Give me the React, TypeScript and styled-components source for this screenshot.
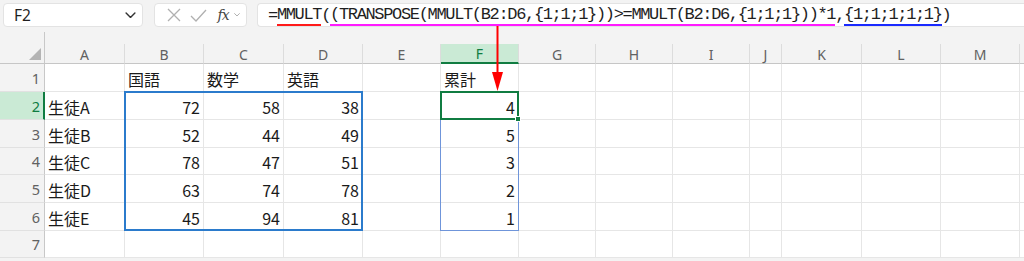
import React from "react";
import styled, { createGlobalStyle } from "styled-components";

const GlobalStyle = createGlobalStyle`
  html, body { margin: 0; padding: 0; background: #f3f3f3; }
  * { box-sizing: border-box; }
`;

const COLS = [
  { key: "", w: 45 },
  { key: "A", w: 80 },
  { key: "B", w: 79 },
  { key: "C", w: 80 },
  { key: "D", w: 79 },
  { key: "E", w: 78 },
  { key: "F", w: 78 },
  { key: "G", w: 77 },
  { key: "H", w: 77 },
  { key: "I", w: 77 },
  { key: "J", w: 32 },
  { key: "K", w: 80 },
  { key: "L", w: 79 },
  { key: "M", w: 79 },
  { key: "N", w: 40 },
];
const HEADER_H = 20;
const ROW_H = [28, 28, 28, 27, 28, 28, 27];
const GRID_TOP = 44;

const colLeft = (i: number) => COLS.slice(0, i).reduce((s, c) => s + c.w, 0);
const rowTop = (r: number) => GRID_TOP + HEADER_H + ROW_H.slice(0, r - 1).reduce((s, h) => s + h, 0);

type CellVal = { t: string; num?: boolean };
const DATA: Record<number, Record<string, CellVal>> = {
  1: { B: { t: "国語" }, C: { t: "数学" }, D: { t: "英語" }, F: { t: "累計" } },
  2: { A: { t: "生徒A" }, B: { t: "72", num: true }, C: { t: "58", num: true }, D: { t: "38", num: true }, F: { t: "4", num: true } },
  3: { A: { t: "生徒B" }, B: { t: "52", num: true }, C: { t: "44", num: true }, D: { t: "49", num: true }, F: { t: "5", num: true } },
  4: { A: { t: "生徒C" }, B: { t: "78", num: true }, C: { t: "47", num: true }, D: { t: "51", num: true }, F: { t: "3", num: true } },
  5: { A: { t: "生徒D" }, B: { t: "63", num: true }, C: { t: "74", num: true }, D: { t: "78", num: true }, F: { t: "2", num: true } },
  6: { A: { t: "生徒E" }, B: { t: "45", num: true }, C: { t: "94", num: true }, D: { t: "81", num: true }, F: { t: "1", num: true } },
};

const Page = styled.div`
  position: relative;
  width: 1024px;
  height: 261px;
  overflow: hidden;
  background: #f3f3f3;
`;

const Toolbar = styled.div`
  display: flex;
  align-items: stretch;
  height: 27px;
  padding: 3px 0 0 3px;
`;

const NameBox = styled.div`
  width: 140px;
  height: 24px;
  background: #fff;
  border: 1px solid #e3e3e3;
  border-radius: 4px;
  display: flex;
  align-items: center;
  justify-content: space-between;
  padding: 0 6px 0 10px;
  font-family: "Noto Sans", "Liberation Sans", sans-serif;
  font-size: 15.5px;
  color: #1f1f1f;
`;

const FnBox = styled.div`
  width: 93px;
  height: 24px;
  margin-left: 11px;
  background: #fff;
  border: 1px solid #e3e3e3;
  border-radius: 4px;
  display: flex;
  align-items: center;
  padding: 0 0 0 8px;
`;

const FnIcon = styled.span<{ $w: number }>`
  width: ${(p) => p.$w}px;
  display: flex;
  align-items: center;
  justify-content: center;
`;

const Fx = styled.span`
  font-family: "DejaVu Serif", "Liberation Serif", serif;
  font-style: italic;
  font-size: 14px;
  color: #444;
  letter-spacing: -1px;
  margin-left: 4px;
`;

const FormulaBox = styled.div`
  flex: 1;
  height: 24px;
  margin-left: 10px;
  background: #fff;
  border: 1px solid #e3e3e3;
  border-right: none;
  border-radius: 4px 0 0 4px;
  display: flex;
  align-items: center;
  padding-left: 10px;
  font-family: "Liberation Mono", "DejaVu Sans Mono", monospace;
  font-size: 17px;
  letter-spacing: -1.34px;
  color: #1f1f1f;
  white-space: nowrap;
`;

const Mark = styled.span<{ $c: string }>`
  border-bottom: 2px solid ${(p) => p.$c};
`;

const Strip = styled.div`
  height: 17px;
  display: flex;
  align-items: flex-end;
`;

const StripCorner = styled.div`
  width: 45px;
  height: 12px;
  border-right: 1px solid #c8c8c8;
`;

const Grid = styled.div`
  display: grid;
  grid-template-columns: ${COLS.map((c) => c.w + "px").join(" ")};
  grid-template-rows: ${HEADER_H}px ${ROW_H.map((h) => h + "px").join(" ")};
  background: #fff;
`;

const ColHead = styled.div<{ $sel?: boolean }>`
  background: ${(p) => (p.$sel ? "#caead5" : "#f3f3f3")};
  border-right: 1px solid #dcdcdc;
  border-bottom: ${(p) => (p.$sel ? "2px solid #107c41" : "1px solid #c6c6c6")};
  display: flex;
  align-items: center;
  justify-content: center;
  font-family: "Noto Sans", "Liberation Sans", sans-serif;
  font-size: 14px;
  color: ${(p) => (p.$sel ? "#107c41" : "#616161")};
  padding-top: 1px;
`;

const Corner = styled.div`
  background: #f3f3f3;
  border-right: 1px solid #c8c8c8;
  border-bottom: 1px solid #c6c6c6;
  display: flex;
  align-items: flex-end;
  justify-content: flex-end;
  padding: 0 3px 3px 0;
`;

const RowHead = styled.div<{ $sel?: boolean }>`
  background: ${(p) => (p.$sel ? "#caead5" : "#f3f3f3")};
  border-right: ${(p) => (p.$sel ? "2px solid #107c41" : "1px solid #c8c8c8")};
  border-bottom: 1px solid #e1e1e1;
  display: flex;
  align-items: center;
  justify-content: flex-end;
  padding-right: ${(p) => (p.$sel ? "3px" : "4px")};
  font-family: "Noto Sans", "Liberation Sans", sans-serif;
  font-size: 14.5px;
  color: ${(p) => (p.$sel ? "#107c41" : "#616161")};
`;

const Cell = styled.div<{ $num?: boolean }>`
  border-right: 1px solid #e6e6e6;
  border-bottom: 1px solid #e6e6e6;
  display: flex;
  align-items: flex-end;
  justify-content: ${(p) => (p.$num ? "flex-end" : "flex-start")};
  padding: 0 3px 2px 3px;
  font-family: "Noto Sans CJK JP", "Noto Sans", sans-serif;
  font-size: 16px;
  line-height: 20px;
  color: #1a1a1a;
  white-space: nowrap;
`;

const RangeBox = styled.div<{ $c: string; $bw: number }>`
  position: absolute;
  border: ${(p) => p.$bw}px solid ${(p) => p.$c};
  pointer-events: none;
`;

const FillHandle = styled.div`
  position: absolute;
  width: 6px;
  height: 6px;
  background: #107c41;
  border: 1px solid #fff;
`;

const ArrowLayer = styled.svg`
  position: absolute;
  left: 0;
  top: 0;
  pointer-events: none;
`;

function XIcon() {
  return (
    <svg width="14" height="14" viewBox="0 0 14 14">
      <path d="M1 1 L13 13 M13 1 L1 13" stroke="#b0b0b0" strokeWidth="1.3" fill="none" />
    </svg>
  );
}
function CheckIcon() {
  return (
    <svg width="17" height="13" viewBox="0 0 17 13">
      <path d="M1 7 L6 12 L16 1" stroke="#b0b0b0" strokeWidth="1.3" fill="none" />
    </svg>
  );
}
function Chevron({ size, color }: { size: number; color: string }) {
  return (
    <svg width={size} height={size * 0.6} viewBox="0 0 10 6">
      <path d="M1 1 L5 5 L9 1" stroke={color} strokeWidth="1.3" fill="none" strokeLinecap="round" />
    </svg>
  );
}

function Range({ c1, r1, c2, r2, color, bw }: { c1: number; r1: number; c2: number; r2: number; color: string; bw: number }) {
  const left = colLeft(c1) - 1;
  const top = rowTop(r1) - 1;
  const right = colLeft(c2 + 1);
  const bottom = rowTop(r2 + 1);
  return (
    <RangeBox
      $c={color}
      $bw={bw}
      style={{ left, top, width: right - left, height: bottom - top }}
    />
  );
}

export default function App() {
  const rows = [1, 2, 3, 4, 5, 6, 7];
  const fIdx = COLS.findIndex((c) => c.key === "F");
  const bIdx = COLS.findIndex((c) => c.key === "B");
  const dIdx = COLS.findIndex((c) => c.key === "D");
  return (
    <Page>
      <GlobalStyle />
      <Toolbar>
        <NameBox>
          <span>F2</span>
          <Chevron size={11} color="#333" />
        </NameBox>
        <FnBox>
          <FnIcon $w={22}>
            <XIcon />
          </FnIcon>
          <FnIcon $w={30}>
            <CheckIcon />
          </FnIcon>
          <Fx>fx</Fx>
          <FnIcon $w={18}>
            <Chevron size={6} color="#999" />
          </FnIcon>
        </FnBox>
        <FormulaBox>
          =<Mark $c="#ff1a1a">MMULT</Mark>(
          <Mark $c="#ff1aff">(TRANSPOSE(MMULT(B2:D6,{"{1;1;1}"}))&gt;=MMULT(B2:D6,{"{1;1;1}"}))*1</Mark>,
          <Mark $c="#1a2aff">{"{1;1;1;1;1}"}</Mark>)
        </FormulaBox>
      </Toolbar>
      <Strip>
        <StripCorner />
      </Strip>
      <Grid>
        <Corner>
          <svg width="12" height="12" viewBox="0 0 12 12">
            <polygon points="12,0 12,12 0,12" fill="#b4b4b4" />
          </svg>
        </Corner>
        {COLS.slice(1).map((c) => (
          <ColHead key={c.key} $sel={c.key === "F"}>
            {c.key !== "N" ? c.key : ""}
          </ColHead>
        ))}
        {rows.map((r) => (
          <React.Fragment key={r}>
            <RowHead $sel={r === 2}>{r}</RowHead>
            {COLS.slice(1).map((c) => {
              const v = DATA[r]?.[c.key];
              return (
                <Cell key={c.key} $num={v?.num}>
                  {v?.t ?? ""}
                </Cell>
              );
            })}
          </React.Fragment>
        ))}
      </Grid>
      <Range c1={bIdx} r1={2} c2={dIdx} r2={6} color="#2b7bcc" bw={2} />
      <Range c1={fIdx} r1={3} c2={fIdx} r2={6} color="#6f95da" bw={1} />
      <Range c1={fIdx} r1={2} c2={fIdx} r2={2} color="#107c41" bw={2} />
      <FillHandle style={{ left: colLeft(fIdx + 1) - 4, top: rowTop(3) - 4 }} />
      <ArrowLayer width="1024" height="261">
        <line x1="497.5" y1="26" x2="497.5" y2="74" stroke="#ff0000" strokeWidth="2" />
        <polygon points="492,72 503,72 497.5,91" fill="#ff0000" />
      </ArrowLayer>
    </Page>
  );
}
